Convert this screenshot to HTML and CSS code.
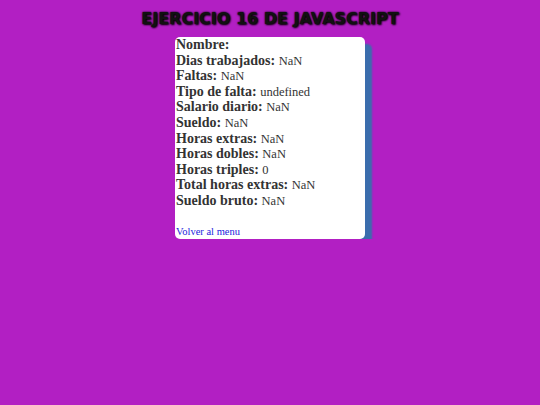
FILE: index.html
```html
<!DOCTYPE html>
<html lang="es">
<head>
<meta charset="utf-8">
<title>Ejercicio 16</title>
<link rel="stylesheet" href="styles.css">
</head>
<body>
<h1 class="title">EJERCICIO 16 DE JAVASCRIPT</h1>
<div class="card">
  <div class="row"><b>Nombre:</b> </div>
  <div class="row"><b>Dias trabajados:</b> <span>NaN</span></div>
  <div class="row"><b>Faltas:</b> <span>NaN</span></div>
  <div class="row"><b>Tipo de falta:</b> <span>undefined</span></div>
  <div class="row"><b>Salario diario:</b> <span>NaN</span></div>
  <div class="row"><b>Sueldo:</b> <span>NaN</span></div>
  <div class="row"><b>Horas extras:</b> <span>NaN</span></div>
  <div class="row"><b>Horas dobles:</b> <span>NaN</span></div>
  <div class="row"><b>Horas triples:</b> <span>0</span></div>
  <div class="row"><b>Total horas extras:</b> <span>NaN</span></div>
  <div class="row"><b>Sueldo bruto:</b> <span>NaN</span></div>
  <a class="back" href="#">Volver al menu</a>
</div>
</body>
</html>
```
FILE: styles.css
```css
html, body {
  margin: 0;
  padding: 0;
}
body {
  background: #b21fc3;
  font-family: "Liberation Serif", "Times New Roman", serif;
  padding-top: 9px;
}
.title {
  margin: 0 0 9px 0;
  text-align: center;
  font-family: "DejaVu Sans", sans-serif;
  font-weight: 900;
  font-size: 16px;
  line-height: 19px;
  color: #111;
  text-shadow: 0 0 2px #000, 1px 1px 2px #000;
  letter-spacing: 0;
}
.card {
  width: 190px;
  margin-left: 175px;
  background: #fff;
  border-radius: 5px;
  box-shadow: 7px 7px 2px #3b6dad;
  padding: 0 0 1px 1px;
  box-sizing: border-box;
  color: #333;
}
.row {
  font-size: 14px;
  line-height: 15.6px;
  height: 15.6px;
}
.row b {
  font-weight: bold;
}
.row span {
  font-size: 12.5px;
  line-height: 1;
}
.back {
  display: block;
  margin-top: 17px;
  font-size: 10.5px;
  line-height: 12px;
  color: #2222dd;
  text-decoration: none;
}
```
